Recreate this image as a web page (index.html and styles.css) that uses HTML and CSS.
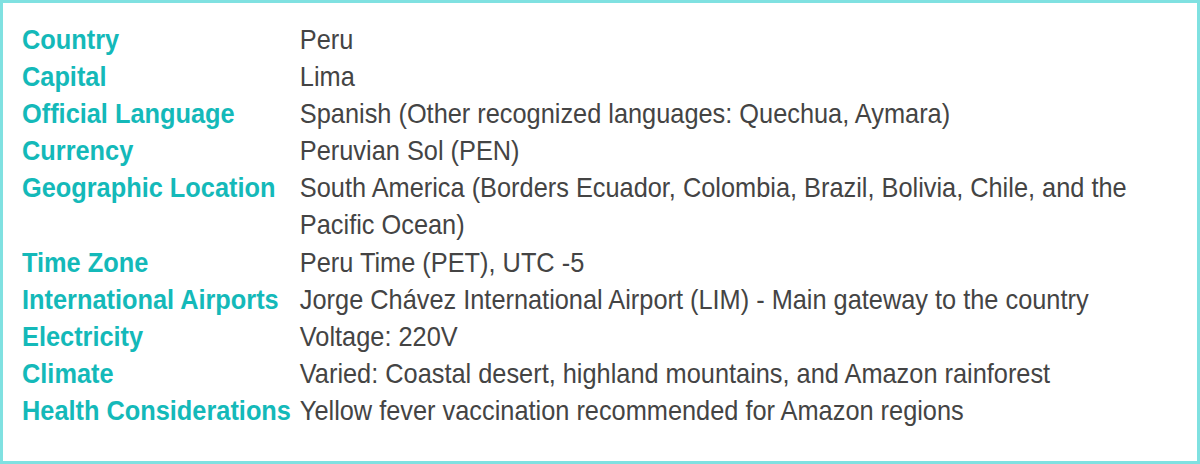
FILE: index.html
```html
<!DOCTYPE html>
<html lang="en">
<head>
<meta charset="utf-8">
<title>Peru Facts</title>
<link rel="stylesheet" href="styles.css">
</head>
<body>
<div class="card">
  <dl class="facts">
    <dt>Country</dt><dd>Peru</dd>
    <dt>Capital</dt><dd>Lima</dd>
    <dt>Official Language</dt><dd>Spanish (Other recognized languages: Quechua, Aymara)</dd>
    <dt>Currency</dt><dd>Peruvian Sol (PEN)</dd>
    <dt>Geographic Location</dt><dd>South America (Borders Ecuador, Colombia, Brazil, Bolivia, Chile, and the Pacific Ocean)</dd>
    <dt>Time Zone</dt><dd>Peru Time (PET), UTC -5</dd>
    <dt>International Airports</dt><dd>Jorge Chávez International Airport (LIM) - Main gateway to the country</dd>
    <dt>Electricity</dt><dd>Voltage: 220V</dd>
    <dt>Climate</dt><dd>Varied: Coastal desert, highland mountains, and Amazon rainforest</dd>
    <dt>Health Considerations</dt><dd>Yellow fever vaccination recommended for Amazon regions</dd>
  </dl>
</div>
</body>
</html>
```
FILE: styles.css
```css
html, body {
  margin: 0;
  padding: 0;
  background: #ffffff;
  overflow: hidden;
}
.card {
  box-sizing: border-box;
  width: 1200px;
  height: 464px;
  border: 3px solid #80e1e1;
  padding: 18px 0 0 19px;
  overflow: hidden;
}
.facts {
  margin: 0;
  width: 1275px;
  display: grid;
  grid-template-columns: 307px 1fr;
  font-family: "Liberation Sans", Arial, sans-serif;
  font-size: 28px;
  line-height: 37.1px;
  transform: scaleX(0.905);
  transform-origin: 0 0;
}
.facts dt {
  font-weight: bold;
  color: #14b9b9;
  white-space: nowrap;
}
.facts dd {
  margin: 0;
  color: #444444;
}
```
